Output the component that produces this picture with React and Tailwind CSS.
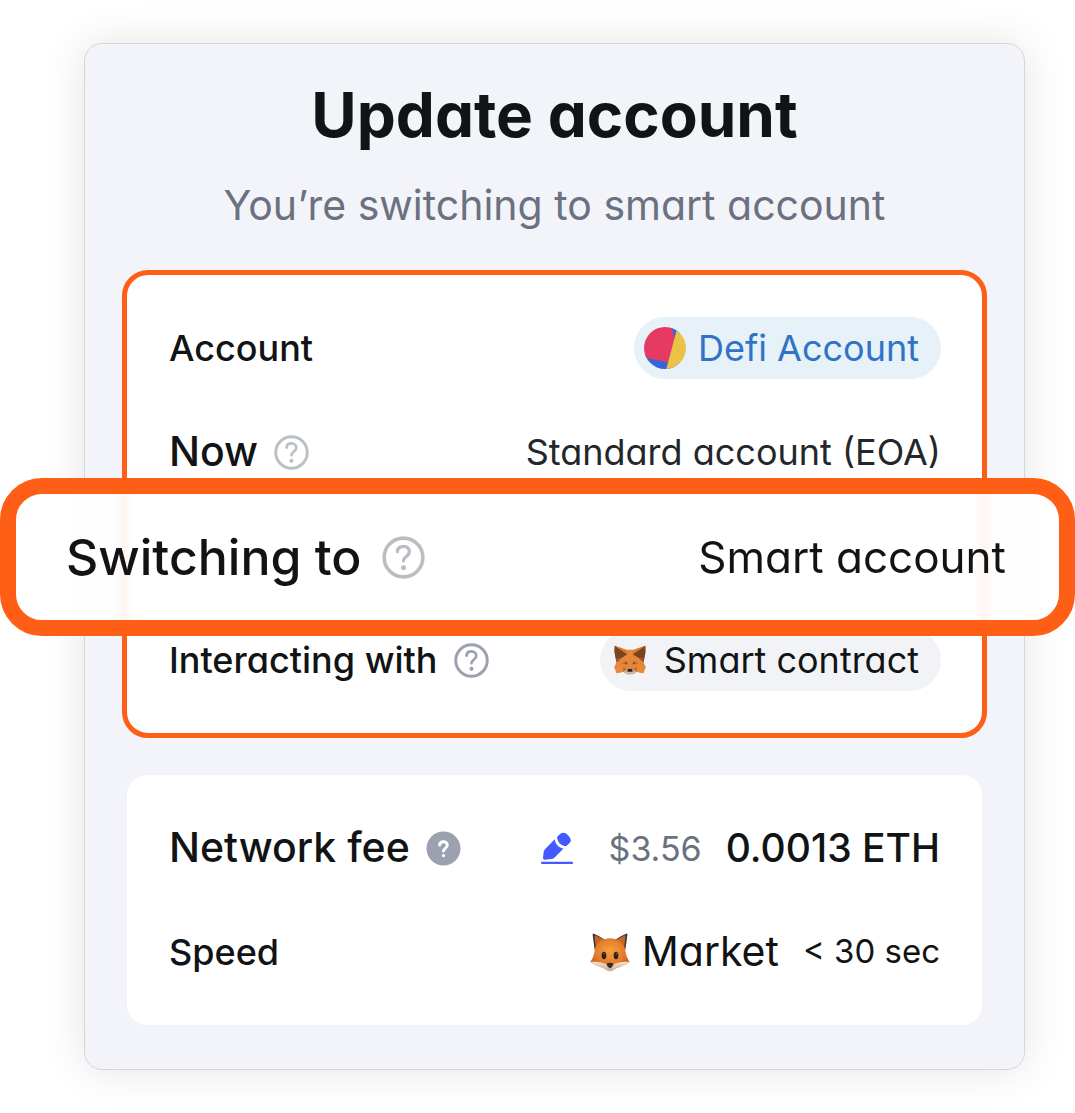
import clsx from 'clsx'

function HelpIcon({ filled = false, className }) {
  return (
    <svg viewBox="0 0 36 36" fill="none" className={className} aria-hidden="true">
      {filled ? (
        <circle cx="18" cy="18" r="17.5" fill="currentColor" />
      ) : (
        <circle cx="18" cy="18" r="16.2" stroke="currentColor" strokeWidth="3" />
      )}
      <g transform={filled ? 'translate(3.8 4.2) scale(0.79)' : undefined} className={filled ? 'text-white' : undefined}>
        <path
          d="M12.9 13c.2-2.8 2.3-4.3 5.1-4.3s4.9 1.8 4.9 4.4c0 2-1.2 3-2.6 4.1-1.5 1.2-2.3 2-2.3 3.6"
          stroke="currentColor"
          strokeWidth={filled ? 3.8 : 2.8}
          strokeLinecap="round"
        />
        <circle cx="18" cy="26.6" r="2.1" fill="currentColor" />
      </g>
    </svg>
  )
}

function EditIcon() {
  return (
    <svg viewBox="0 0 96 96" fill="#4459ff" className="size-8" aria-hidden="true">
      <path d="M41 22C43 36 52 47 67 50L40 77Q36 81 31 81L11 83Q6 83 6 78L8 60Q9 55 12 52Z" />
      <path d="M48 15 57 6Q67-2 77 6L85 14Q93 24 86 33L75 43C59 41 50 31 48 15Z" />
      <rect x="0" y="89" width="96" height="7" rx="3" />
    </svg>
  )
}

function Avatar() {
  return (
    <svg viewBox="0 0 42 42" className="size-[42px] rounded-full" aria-hidden="true">
      <path d="M26 0H36V44H0V28Z" fill="#3565dc" />
      <path d="M-2-2H27.3L30.6 12 24 35.5 3 31-2 30Z" fill="#e73a63" />
      <path d="M33.5 0H44V44H21.8Z" fill="#ebc246" />
    </svg>
  )
}

function MetaMaskFox() {
  return (
    <svg viewBox="0 0 96 88" className="h-[30px] w-8" aria-hidden="true">
      <path d="M2 1 36 13H60L94 1 91 36 88 50 95 65 88 84 69 79 56 87H40L27 79 8 84 1 65 8 50 5 36Z" fill="#e4873a" />
      <path d="M2 1 40 27 22 38 5 41 1 18Z" fill="#7a4322" />
      <path d="M94 1 56 27 74 38 91 41 95 18Z" fill="#7a4322" />
      <path d="M2 1 36 13 40 27Z" fill="#d9792f" />
      <path d="M94 1 60 13 56 27Z" fill="#d9792f" />
      <path d="M5 41 22 38 8 52Z" fill="#9c5227" />
      <path d="M91 41 74 38 88 52Z" fill="#9c5227" />
      <path d="M1 65H27L27 79 8 84Z" fill="#e58a3c" />
      <path d="M95 65H69V79L88 84Z" fill="#e58a3c" />
      <path d="M27 64 38 71 27 79Z" fill="#cb6b2b" />
      <path d="M69 64 58 71 69 79Z" fill="#cb6b2b" />
      <path d="M22 55 36 46 41 58Z" fill="#ce6a26" />
      <path d="M74 55 60 46 55 58Z" fill="#ce6a26" />
      <path d="M32 53 38 51 40 56Z" fill="#4f382b" />
      <path d="M64 53 58 51 56 56Z" fill="#4f382b" />
      <path d="M29 79 39 75H57L67 79 56 87H40Z" fill="#c8b8aa" />
      <path d="M42 71H54L56 79H40Z" fill="#20242b" />
    </svg>
  )
}

function FoxFace() {
  return (
    <svg viewBox="0 0 120 116" className="h-[39px] w-10" aria-hidden="true">
      <defs>
        <radialGradient id="fox-face" cx="0.5" cy="0.4" r="0.6">
          <stop offset="0" stopColor="#f5a23c" />
          <stop offset="0.6" stopColor="#e57d2b" />
          <stop offset="1" stopColor="#c9571b" />
        </radialGradient>
        <linearGradient id="fox-cheek" x1="0" y1="0" x2="0" y2="1">
          <stop offset="0" stopColor="#f2e3cd" />
          <stop offset="1" stopColor="#c4ab92" />
        </linearGradient>
      </defs>
      <path d="M10 1Q8 0 8 6L14 50 48 22Q28 8 10 1Z" fill="#3b3533" />
      <path d="M110 1Q112 0 112 6L106 50 72 22Q92 8 110 1Z" fill="#3b3533" />
      <path d="M14 10Q14 6 18 8L47 23 18 52Z" fill="#cc6524" />
      <path d="M106 10Q106 6 102 8L73 23 102 52Z" fill="#cc6524" />
      <path
        d="M60 15C79 15 98 25 105 47 107 66 113 78 119 87 107 94 94 99 79 104 72 109 66 113 60 113S48 109 41 104C26 99 13 94 1 87 7 78 13 66 15 47 22 25 41 15 60 15Z"
        fill="url(#fox-face)"
      />
      <path d="M1 87C18 84 38 88 53 95Q60 88 67 95C82 88 102 84 119 87 109 95 94 100 80 105 71 110 66 114 60 114S49 110 40 105C26 100 11 95 1 87Z" fill="url(#fox-cheek)" />
      <ellipse cx="42" cy="67" rx="7" ry="11" fill="#2b211f" />
      <ellipse cx="78" cy="67" rx="7" ry="11" fill="#2b211f" />
      <circle cx="43" cy="62" r="2" fill="#a9978f" />
      <circle cx="79" cy="62" r="2" fill="#a9978f" />
      <path d="M50 92Q60 86 70 92 71 98 60 106 49 98 50 92Z" fill="#352c2c" />
    </svg>
  )
}

function Row({ label, labelClass, help, children }) {
  return (
    <div className="flex h-[104px] items-center justify-between">
      <div className="flex items-center gap-4">
        <span className={clsx('font-medium', labelClass)}>{label}</span>
        {help && (
          <button type="button" aria-label={`About ${label}`} className={help.color}>
            <HelpIcon filled={help.filled} className="size-[35px]" />
          </button>
        )}
      </div>
      <div className="flex items-center">{children}</div>
    </div>
  )
}

export default function App() {
  return (
    <main className="bg-white pt-[43px] pr-[50px] pb-[43px] pl-[84px] font-['Inter',sans-serif] whitespace-nowrap text-[#121314] [font-feature-settings:'cv11']">
      <section className="rounded-[18px] border border-[#d6d6d8] bg-[#f3f4f9] px-[37px] pb-11 shadow-[0_0_44px_rgba(0,0,0,0.11)]">
        <header className="pt-[31px] text-center">
          <h1 className="text-[62px] leading-20 font-bold">Update account</h1>
          <p className="mt-5 text-[41px] leading-[60px] text-[#6a7180]">You’re switching to smart account</p>
        </header>

        <div className="relative mt-[35px] rounded-[26px] border-5 border-[#ff5e16] bg-white py-[21px] pr-[41px] pl-[42px]">
          <Row label="Account" labelClass="text-[36px]">
            <button type="button" className="flex h-[62px] items-center gap-3 rounded-full bg-[#e6f1f8] pr-[22px] pl-[10px] text-[36px] text-[#3073c6]">
              <Avatar />
              Defi Account
            </button>
          </Row>
          <Row label="Now" labelClass="text-[41px]" help={{ color: 'text-[#bbc0c5]' }}>
            <span className="text-[36px] text-[#24272a]">Standard account (EOA)</span>
          </Row>

          {/* Highlighted row, wider than the box it sits on */}
          <div className="relative h-[104px]">
            <div className="absolute -top-[26px] -right-[134px] -left-[169px] flex h-[158px] items-center justify-between rounded-[42px] border-16 border-[#ff5e16] bg-white/88 pr-[53px] pl-[50px] backdrop-blur-[4px]">
              <div className="flex items-center gap-5">
                <span className="text-[50px] font-medium">Switching to</span>
                <button type="button" aria-label="About Switching to" className="text-[#b9bec3]">
                  <HelpIcon className="size-[43px]" />
                </button>
              </div>
              <span className="text-[44px]">Smart account</span>
            </div>
          </div>

          <Row label="Interacting with" labelClass="text-[36px]" help={{ color: 'text-[#9ca1af]' }}>
            <button type="button" className="flex h-[62px] items-center gap-[18px] rounded-full bg-[#f2f3f6] pr-[22px] pl-[14px] text-[36px]">
              <MetaMaskFox />
              Smart contract
            </button>
          </Row>
        </div>

        <div className="mx-[5px] mt-[37px] rounded-[20px] bg-white px-[42px] py-[21px]">
          <Row label="Network fee" labelClass="text-[41px]" help={{ color: 'text-[#9ca1af]', filled: true }}>
            <button type="button" aria-label="Edit network fee">
              <EditIcon />
            </button>
            <span className="ml-9 text-[34px] text-[#6a7180]">$3.56</span>
            <span className="ml-6 text-[39px] font-medium">0.0013 ETH</span>
          </Row>
          <Row label="Speed" labelClass="text-[36px]">
            <FoxFace />
            <span className="ml-3 text-[41px]">Market</span>
            <span className="ml-6 text-[33px]">&lt; 30 sec</span>
          </Row>
        </div>
      </section>
    </main>
  )
}
